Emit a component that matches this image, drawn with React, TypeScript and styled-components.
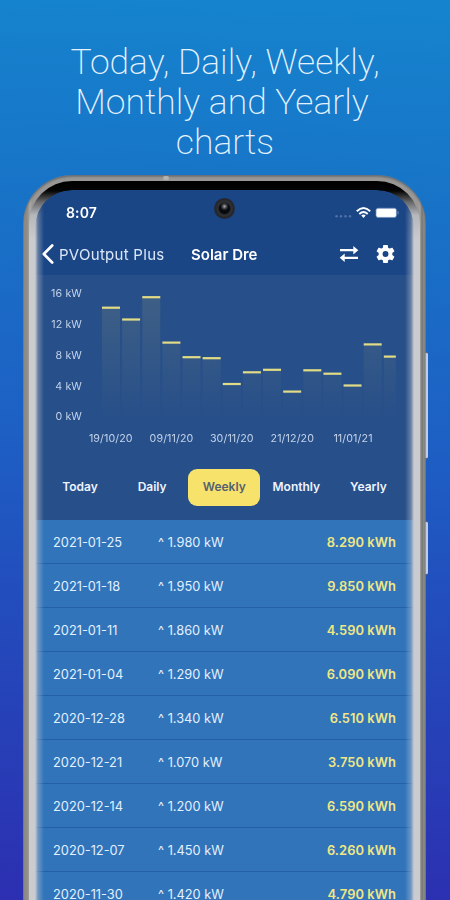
import React from "react";
import styled, { createGlobalStyle } from "styled-components";

const GlobalStyle = createGlobalStyle`
  *, *::before, *::after { box-sizing: border-box; }
  html, body { margin: 0; padding: 0; overflow: hidden; }
`;

const Page = styled.main`
  width: 450px;
  height: 900px;
  overflow: hidden;
  display: flex;
  flex-direction: column;
  background: linear-gradient(182deg, #1584ce 0%, #1871c6 25%, #1d60c4 48%, #234abb 70%, #2c2fb1 100%);
  font-family: Inter, "Liberation Sans", sans-serif;
`;

const Headline = styled.h1`
  margin: 0;
  height: 175px;
  flex: none;
  padding-top: 42px;
  text-align: center;
  font: 200 35.5px/40px Roboto, sans-serif;
  color: #e6f3ff;
`;

const HeadlineLine = styled.span<{ $shift?: number }>`
  display: block;
  padding-right: ${(p) => p.$shift ?? 0}px;
`;

const Phone = styled.section`
  position: relative;
  flex: none;
  width: 403px;
  height: 800px;
  margin-left: 23px;
  padding: 6px 6px 0;
  border-radius: 49px 49px 0 0;
  background:
    linear-gradient(to right, #77787b 0, #8d8b88 1.5px, #8f8b85 4px, #aaa9a7 7px, transparent 9px),
    linear-gradient(to left, #69716f 0, #8c8d8a 2px, #777875 4px, #a3a3a2 6px, transparent 8px),
    #999896;
  box-shadow: inset 0 1px 1px #66717b, inset 0 2px 2px #777;
`;

const Bezel = styled.div`
  height: 100%;
  padding: 9px 6px 0;
  border-radius: 43px 43px 0 0;
  background: linear-gradient(to bottom, #000 0, #050505 10px, #66676a 21px, #b5b8bb 34px, #cbcccf 60px, #cbcccf 100%);
`;

const Screen = styled.div`
  height: 100%;
  display: flex;
  flex-direction: column;
  border-radius: 37px 37px 0 0;
  overflow: hidden;
  background: #1b4686;
  color: #fff;
  mask-image: linear-gradient(to right, transparent 0, rgba(0, 0, 0, 0.6) 3px, #000 9px, #000 370px, rgba(0, 0, 0, 0.6) 376px, transparent 379px);
`;

const StatusBar = styled.div`
  height: 44px;
  flex: none;
  display: flex;
  align-items: center;
  padding: 1px 15.5px 0 31px;
`;

const Clock = styled.span`
  flex: 1;
  font-size: 14px;
  font-weight: 600;
  letter-spacing: 0.1px;
`;

const Camera = styled.div`
  position: absolute;
  left: 191px;
  top: 23px;
  width: 21px;
  height: 21px;
  border-radius: 50%;
  background: radial-gradient(circle at 50% 40%, #aaacb0 0, #4a4c50 2px, transparent 4px),
    radial-gradient(circle, #090a0d 0 5px, #303136 6.5px, #26272a 9px, #222a3b 11px);
`;

const Speaker = styled.div`
  position: absolute;
  left: 140px;
  top: 1px;
  width: 6px;
  height: 4px;
  border-radius: 2px;
  background: #b5b2b0;
`;

const NavBar = styled.nav`
  height: 41px;
  flex: none;
  display: flex;
  align-items: center;
  padding-left: 6px;
  padding-bottom: 1px;
  svg { display: block; }
`;

const BackLabel = styled.span`
  width: 137px;
  padding-left: 5px;
  font-size: 15px;
  letter-spacing: 0.28px;
  white-space: nowrap;
  color: #dce8f8;
`;

const Title = styled.span`
  width: 148px;
  font-size: 15px;
  font-weight: 600;
  white-space: nowrap;
`;

const GearIcon = styled.svg`
  margin-left: 17px;
`;

const ChartPanel = styled.div`
  flex: none;
  height: 182px;
  background: #274f89;
  svg { display: block; }
`;

const AxisText = styled.text`
  font: 400 10.7px Inter, sans-serif;
  letter-spacing: 0.1px;
  fill: #c3d3ea;
`;

const Tabs = styled.div`
  flex: none;
  height: 63px;
  padding: 11.5px 0 0 9px;
  display: flex;
  background: #274f89;
`;

const Tab = styled.button<{ $active?: boolean }>`
  width: 72.1px;
  height: 37px;
  padding: 0 0 1px;
  border: 0;
  border-radius: 9px;
  background: ${(p) => (p.$active ? "#f7e26c" : "transparent")};
  color: ${(p) => (p.$active ? "#56616f" : "#edf4ff")};
  font: 600 12px Inter, sans-serif;
`;

const List = styled.div`
  flex: 1;
  background: #3174ba;
`;

const Row = styled.div`
  height: 44px;
  display: grid;
  grid-template-columns: 105px 1fr auto;
  align-items: center;
  padding: 1px 18px 0 18px;
  border-bottom: 1px solid #2360a6;
  font-size: 12.8px;
  color: #e2f0ff;
  white-space: nowrap;
`;

const Energy = styled.span`
  font-weight: 600;
  font-size: 12.9px;
  letter-spacing: 0.08px;
  color: #f0e784;
`;

const SideButton = styled.div<{ $top: number; $height: number }>`
  position: absolute;
  left: 402px;
  top: ${(p) => p.$top}px;
  width: 3px;
  height: ${(p) => p.$height}px;
  border-radius: 0 2px 2px 0;
  border-top: 1px solid #66737d;
  border-bottom: 1px solid #66737d;
  background: linear-gradient(to right, #727d84, #c9d5ed 55%, #b7c8ef);
`;

const barTops = [307.7, 319.5, 297.2, 342.6, 357.2, 358.2, 384, 372.3, 369.8, 391.6, 370.3, 373.7, 385.5, 344.4, 356.6];
const yLabels = ["16 kW", "12 kW", "8 kW", "4 kW", "0 kW"];
const xLabels = ["19/10/20", "09/11/20", "30/11/20", "21/12/20", "11/01/21"];
const xCenters = [110.8, 171.5, 231.8, 292.3, 353];
const rows = [
  ["2021-01-25", "1.980", "8.290"],
  ["2021-01-18", "1.950", "9.850"],
  ["2021-01-11", "1.860", "4.590"],
  ["2021-01-04", "1.290", "6.090"],
  ["2020-12-28", "1.340", "6.510"],
  ["2020-12-21", "1.070", "3.750"],
  ["2020-12-14", "1.200", "6.590"],
  ["2020-12-07", "1.450", "6.260"],
  ["2020-11-30", "1.420", "4.790"],
];

const Chart = () => (
  <svg width="379" height="182" viewBox="35 275 379 182">
    <defs>
      <linearGradient id="bar" gradientUnits="userSpaceOnUse" x1="0" x2="0" y1="297" y2="420">
        <stop offset="0" stopColor="#f7e26c" stopOpacity="0.11" />
        <stop offset="1" stopColor="#f7e26c" stopOpacity="0" />
      </linearGradient>
    </defs>
    {yLabels.map((label, i) => (
      <AxisText key={label} x="82" y={296.8 + i * 30.9} textAnchor="end">{label}</AxisText>
    ))}
    {barTops.map((y, i) => {
      const x = 102 + i * 20.13;
      const w = i === barTops.length - 1 ? 12 : 18;
      return (
        <g key={i}>
          <rect x={x} y={y} width={w} height={420 - y} fill="url(#bar)" />
          <rect x={x} y={y - 1.1} width={w} height="2.2" fill="#e3dc86" />
        </g>
      );
    })}
    {xLabels.map((label, i) => (
      <AxisText key={label} x={xCenters[i]} y="442" textAnchor="middle">{label}</AxisText>
    ))}
  </svg>
);

export default function App() {
  return (
    <Page>
      <GlobalStyle />
      <Headline>
        <HeadlineLine>Today, Daily, Weekly,</HeadlineLine>
        <HeadlineLine $shift={6}>Monthly and Yearly</HeadlineLine>
        <HeadlineLine>charts</HeadlineLine>
      </Headline>
      <Phone>
        <Bezel>
          <Screen>
            <StatusBar>
              <Clock>8:07</Clock>
              <svg width="65" height="14" viewBox="333 206 65 14">
                {[335.5, 340, 344.5, 349].map((x) => (
                  <circle key={x} cx={x} cy="216.3" r="1.2" fill="#4f74aa" />
                ))}
                <g fill="none" stroke="#fff" strokeWidth="1.9">
                  <path d="M355.8 211.2Q362.5 204.8 369.2 211.2" />
                  <path d="M358.3 214Q362.5 210 366.7 214" />
                </g>
                <path d="M360.3 215.5q2.2-1.8 4.4 0l-2.2 2.4z" fill="#fff" />
                <rect x="375" y="208.2" width="20.4" height="9.2" rx="2" fill="#fff" stroke="#6486b7" strokeWidth=".7" />
                <path d="M397 211.3v3" stroke="#6486b7" strokeWidth="1.2" />
              </svg>
            </StatusBar>
            <NavBar>
              <svg width="13" height="20" viewBox="0 0 13 20">
                <path d="M11.2 1.5 2.8 10l8.4 8.5" fill="none" stroke="#fff" strokeWidth="2.7" strokeLinecap="round" strokeLinejoin="round" />
              </svg>
              <BackLabel>PVOutput Plus</BackLabel>
              <Title>Solar Dre</Title>
              <svg width="20" height="18" viewBox="0 0 20 18">
                <path d="M1 5.2h14M5 12.8h14" stroke="#fff" strokeWidth="2.2" />
                <path d="m14.3 1 5 4.2-5 4.2zM5.7 8.6l-5 4.2 5 4.2z" fill="#fff" />
              </svg>
              <GearIcon width="19" height="20" viewBox="2 2 20 20">
                <path fill="#fff" d="M19.14 12.94c.04-.3.06-.61.06-.94 0-.32-.02-.64-.07-.94l2.03-1.58a.49.49 0 0 0 .12-.61l-1.92-3.32a.488.488 0 0 0-.59-.22l-2.39.96c-.5-.38-1.03-.7-1.62-.94l-.36-2.54a.484.484 0 0 0-.48-.41h-3.84c-.24 0-.43.17-.47.41l-.36 2.54c-.59.24-1.13.57-1.62.94l-2.39-.96c-.22-.08-.47 0-.59.22L2.74 8.87c-.12.21-.08.47.12.61l2.03 1.58c-.05.3-.09.63-.09.94s.02.64.07.94l-2.03 1.58a.49.49 0 0 0-.12.61l1.92 3.32c.12.22.37.29.59.22l2.39-.96c.5.38 1.03.7 1.62.94l.36 2.54c.05.24.24.41.48.41h3.84c.24 0 .44-.17.47-.41l.36-2.54c.59-.24 1.13-.56 1.62-.94l2.39.96c.22.08.47 0 .59-.22l1.92-3.32c.12-.22.07-.47-.12-.61l-2.01-1.58zM12 15.1A3.1 3.1 0 1 1 12 8.9a3.1 3.1 0 0 1 0 6.2z" />
              </GearIcon>
            </NavBar>
            <ChartPanel><Chart /></ChartPanel>
            <Tabs>
              {["Today", "Daily", "Weekly", "Monthly", "Yearly"].map((tab) => (
                <Tab key={tab} $active={tab === "Weekly"}>{tab}</Tab>
              ))}
            </Tabs>
            <List>
              {rows.map(([date, power, energy]) => (
                <Row key={date}>
                  <span>{date}</span>
                  <span>^ {power} kW</span>
                  <Energy>{energy} kWh</Energy>
                </Row>
              ))}
            </List>
          </Screen>
        </Bezel>
        <Speaker />
        <Camera />
        <SideButton $top={177} $height={107} />
        <SideButton $top={346} $height={54} />
      </Phone>
    </Page>
  );
}
